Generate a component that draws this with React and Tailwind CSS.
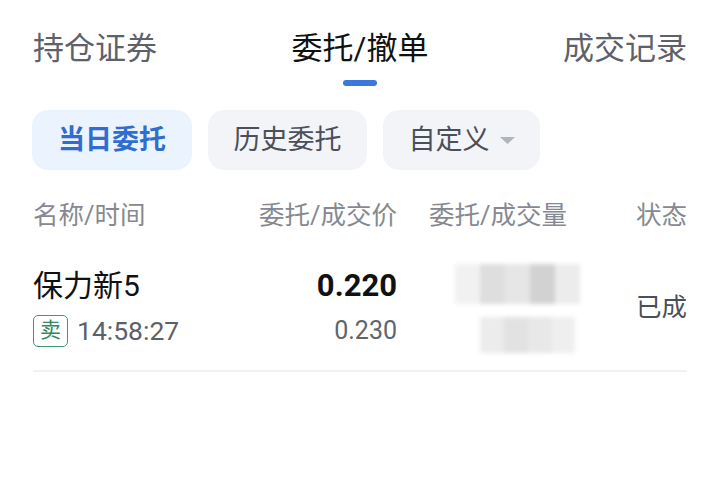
const font = { fontFamily: 'Roboto, "Noto Sans CJK SC", sans-serif' };

const Tabs = () => (
  <div className="flex justify-between px-[33px] pt-[29px]">
    <div className="text-[31px] leading-[40px] text-[#5d616b]">持仓证券</div>
    <div className="flex flex-col items-center">
      <div className="text-[31px] leading-[40px] text-[#111]">委托/撤单</div>
      <div className="mt-[11px] h-[6px] w-[34px] rounded-full bg-[#3a78dd]" />
    </div>
    <div className="text-[31px] leading-[40px] text-[#5d616b]">成交记录</div>
  </div>
);

const Filters = () => (
  <div className="mt-[24px] flex gap-[16px] px-[32px]">
    <div className="flex h-[60px] w-[160px] items-center justify-center rounded-[16px] bg-[#ebf3fe] text-[27px] font-semibold text-[#2f6dd0]">
      当日委托
    </div>
    <div className="flex h-[60px] w-[159px] items-center justify-center rounded-[16px] bg-[#f3f4f8] text-[27px] text-[#4b4f58]">
      历史委托
    </div>
    <div className="flex h-[60px] w-[157px] items-center justify-center gap-[10px] rounded-[16px] bg-[#f3f4f8] text-[27px] text-[#4b4f58]">
      自定义
      <svg width="15" height="7" viewBox="0 0 15 7">
        <path d="M0 0h15L7.5 7z" fill="#b0b4bc" />
      </svg>
    </div>
  </div>
);

const Blurred = () => (
  <div className="flex flex-col gap-[13px] pl-[58px] pt-[2px]">
    <div className="flex h-[40px] w-[125px] blur-[2px]">
      <div className="h-full w-[25px] bg-[#f1f1f1]" />
      <div className="h-full w-[25px] bg-[#dedede]" />
      <div className="h-full w-[25px] bg-[#e6e6e6]" />
      <div className="h-full w-[25px] bg-[#d2d2d2]" />
      <div className="h-full w-[25px] bg-[#ececec]" />
    </div>
    <div className="ml-[25px] flex h-[36px] w-[95px] blur-[2px]">
      <div className="h-full w-[24px] bg-[#ececec]" />
      <div className="h-full w-[24px] bg-[#e2e2e2]" />
      <div className="h-full w-[24px] bg-[#e8e8e8]" />
      <div className="h-full w-[23px] bg-[#efefef]" />
    </div>
  </div>
);

export default function App() {
  return (
    <div className="h-[487px] w-[720px] overflow-hidden bg-white" style={font}>
      <Tabs />
      <Filters />

      <div className="mt-[30px] flex items-center px-[33px] text-[25.5px] leading-[30px] text-[#868991]">
        <div className="w-[140px]">名称/时间</div>
        <div className="w-[224px] text-right">委托/成交价</div>
        <div className="w-[170px] text-right">委托/成交量</div>
        <div className="flex-1 text-right">状态</div>
      </div>

      <div className="mx-[33px] flex items-center border-b-2 border-[#f1f2f4] pt-[32px] pb-[17px]">
        <div className="w-[140px]">
          <div className="text-[30px] leading-[36px] text-[#111]">保力新5</div>
          <div className="mt-[11px] flex items-center gap-[9px]">
            <div className="flex h-[32px] w-[35px] shrink-0 items-center justify-center rounded-[5px] border border-[#3b9a6e] text-[21px] text-[#2f8a5f]">
              卖
            </div>
            <div className="text-[26.5px] leading-[32px] text-[#5c6069]">14:58:27</div>
          </div>
        </div>
        <div className="w-[224px] text-right">
          <div className="text-[31px] font-bold leading-[36px] text-[#111]">0.220</div>
          <div className="mt-[11px] text-[25px] leading-[32px] text-[#60646d]">0.230</div>
        </div>
        <div className="w-[170px]">
          <Blurred />
        </div>
        <div className="flex-1 text-right text-[25.5px] text-[#4b4f58]">已成</div>
      </div>
    </div>
  );
}
